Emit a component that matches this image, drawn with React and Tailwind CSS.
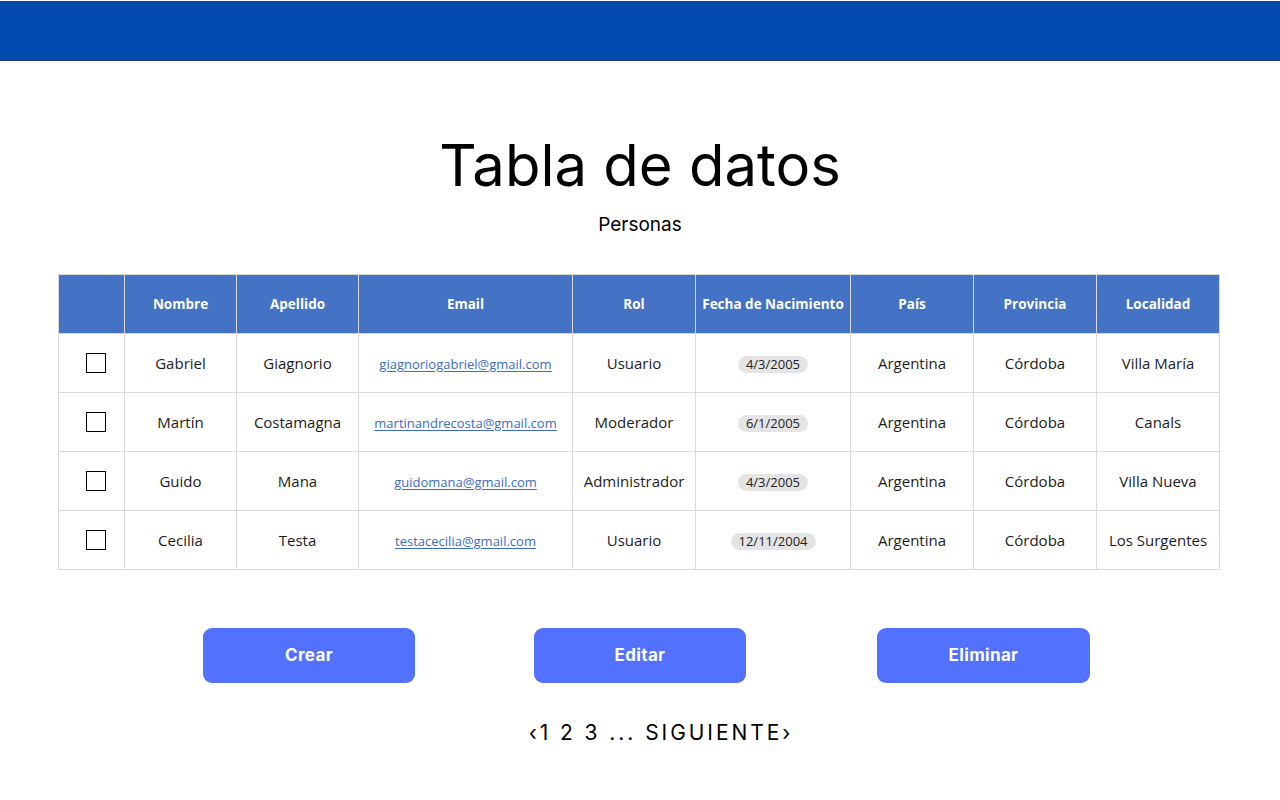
import React from "react";

const personas = [
  { nombre: "Gabriel", apellido: "Giagnorio", email: "giagnoriogabriel@gmail.com", rol: "Usuario", fecha: "4/3/2005", localidad: "Villa María" },
  { nombre: "Martín", apellido: "Costamagna", email: "martinandrecosta@gmail.com", rol: "Moderador", fecha: "6/1/2005", localidad: "Canals" },
  { nombre: "Guido", apellido: "Mana", email: "guidomana@gmail.com", rol: "Administrador", fecha: "4/3/2005", localidad: "Villa Nueva" },
  { nombre: "Cecilia", apellido: "Testa", email: "testacecilia@gmail.com", rol: "Usuario", fecha: "12/11/2004", localidad: "Los Surgentes" },
];

const columnas = [
  { label: "", w: "w-[66px]" },
  { label: "Nombre", w: "w-[112px]" },
  { label: "Apellido", w: "w-[122px]" },
  { label: "Email", w: "w-[214px]" },
  { label: "Rol", w: "w-[123px]" },
  { label: "Fecha de Nacimiento", w: "w-[155px]" },
  { label: "País", w: "w-[123px]" },
  { label: "Provincia", w: "w-[123px]" },
  { label: "Localidad", w: "w-[123px]" },
];

const td = "border border-[#d9d9d9] text-center align-middle h-[59px] p-0";

export default function App() {
  return (
    <div className="w-[1280px] h-[800px] bg-white overflow-hidden font-['Open_Sans',sans-serif]">
      <div className="mt-px h-[60px] bg-[#004aad] border-b border-[#1d3f74]" />

      <h1 className="mt-[72px] text-center text-[58px] leading-[64px] text-black font-['Inter',sans-serif]">
        Tabla de datos
      </h1>
      <p className="mt-[16px] text-center text-[19px] leading-6 text-black font-['Inter',sans-serif]">
        Personas
      </p>

      <div className="mt-[37px] ml-[58px]">
        <table className="table-fixed border-collapse w-[1161px]">
          <thead>
            <tr className="bg-[#4472c4]">
              {columnas.map((c) => (
                <th
                  key={c.label || "sel"}
                  className={`${c.w} h-[59px] border border-[#d9d9d9] text-white text-[13.5px] font-bold text-center p-0`}
                >
                  {c.label}
                </th>
              ))}
            </tr>
          </thead>
          <tbody className="text-[15px] text-[#1c1c1c]">
            {personas.map((p) => (
              <tr key={p.email}>
                <td className={td}>
                  <div className="ml-[27px] w-5 h-5 border border-black bg-white" />
                </td>
                <td className={td}>{p.nombre}</td>
                <td className={td}>{p.apellido}</td>
                <td className={td}>
                  <a className="text-[13px] text-[#3b6cc0] underline underline-offset-2">{p.email}</a>
                </td>
                <td className={td}>{p.rol}</td>
                <td className={td}>
                  <span className="inline-block rounded-full bg-[#e4e4e4] px-[8px] text-[13px] leading-[17px] text-[#222]">
                    {p.fecha}
                  </span>
                </td>
                <td className={td}>Argentina</td>
                <td className={td}>Córdoba</td>
                <td className={td}>{p.localidad}</td>
              </tr>
            ))}
          </tbody>
        </table>
      </div>

      <div className="mt-[58px] flex font-['Inter',sans-serif]">
        <button className="ml-[203px] w-[212px] h-[55px] rounded-[9px] bg-[#5271ff] text-white text-[17px] font-bold tracking-[0.02em]">
          Crear
        </button>
        <button className="ml-[119px] w-[212px] h-[55px] rounded-[9px] bg-[#5271ff] text-white text-[17px] font-bold tracking-[0.02em]">
          Editar
        </button>
        <button className="ml-[131px] w-[213px] h-[55px] rounded-[9px] bg-[#5271ff] text-white text-[17px] font-bold tracking-[0.02em]">
          Eliminar
        </button>
      </div>

      <p className="mt-[36px] pl-[42px] text-center text-[21px] leading-7 tracking-[0.14em] text-black font-['Inter',sans-serif]">
        ‹1 2 3 ... SIGUIENTE›
      </p>
    </div>
  );
}
